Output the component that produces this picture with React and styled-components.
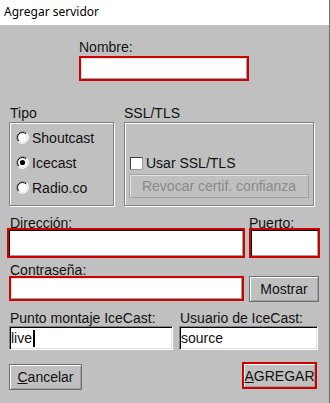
import React from 'react'
import styled, { createGlobalStyle } from 'styled-components'

const GlobalStyle = createGlobalStyle`
  body {
    margin: 0;
    font-family: "Liberation Sans", Arial, sans-serif;
  }
`

const Window = styled.div`
  width: 330px;
  height: 403px;
  box-sizing: border-box;
  border-right: 1px solid #6b6b6b;
  background: #c0c0c0;
  display: flex;
  flex-direction: column;
  overflow: hidden;
  color: #111;
  font-size: 14px;
`

const TitleBar = styled.div`
  height: 25px;
  line-height: 23px;
  flex-shrink: 0;
  background: #fff;
  padding-left: 4px;
  font-family: "Noto Sans", "Liberation Sans", sans-serif;
  font-size: 12px;
  color: #000;
`

const Content = styled.div`
  display: flex;
  flex-direction: column;
  padding-left: 9px;
`

const Section = styled.div`
  display: flex;
  align-items: flex-start;
  gap: ${p => p.$gap || 0}px;
  margin-top: ${p => p.$top || 0}px;
  margin-left: ${p => p.$left || 0}px;
`

const Column = styled.div`
  display: flex;
  flex-direction: column;
  margin-top: ${p => p.$top || 0}px;
`

const Label = styled.div`
  height: ${p => p.$h}px;
  line-height: 16px;
  padding-left: ${p => p.$indent || 0}px;
  white-space: nowrap;
`

const Field = styled.div`
  box-sizing: border-box;
  width: ${p => p.$w}px;
  height: ${p => p.$h}px;
  background: #fff;
  display: flex;
  align-items: center;
  padding-left: 1px;
  white-space: nowrap;
  border: 1px solid;
  border-color: #808080 #fff #fff #808080;
  box-shadow: inset 1px 1px 0 #000, inset -1px -1px 0 #dfdfdf;
`

const RedField = styled.div`
  box-sizing: border-box;
  width: ${p => p.$w}px;
  height: ${p => p.$h}px;
  background: #fff;
  border: 2px solid #cf0000;
  box-shadow: ${p =>
    p.$sunken
      ? 'inset 1px 1px 0 #000, inset -1px -1px 0 #a0a0a0'
      : 'inset 1px 1px 0 #e6e6e6, inset -1px -1px 0 #a0a0a0'};
`

const Caret = styled.span`
  display: inline-block;
  width: 2px;
  height: 17px;
  background: #000;
  margin-left: 1px;
`

const Button = styled.div`
  box-sizing: border-box;
  width: ${p => p.$w}px;
  height: ${p => p.$h}px;
  margin-top: ${p => p.$top || 0}px;
  display: flex;
  align-items: center;
  justify-content: center;
  white-space: nowrap;
  background: #c0c0c0;
  color: ${p => (p.$disabled ? '#8a8a8a' : '#111')};
  border: ${p => (p.$red ? '2px solid #cf0000' : p.$disabled ? '1px solid #a2a2a2' : '1px solid #6e6e6e')};
  box-shadow: ${p =>
    p.$disabled
      ? 'inset 1px 1px 0 #e4e4e4'
      : 'inset 1px 1px 0 #fff, inset -1px -1px 0 #a0a0a0'};
`

const GroupBox = styled.div`
  box-sizing: border-box;
  width: ${p => p.$w}px;
  height: 84px;
  border: 1px solid #808080;
  box-shadow: inset 1px 1px 0 #fff, 1px 1px 0 #fff;
  display: flex;
  flex-direction: column;
`

const RadioList = styled.div`
  display: flex;
  flex-direction: column;
  padding: 2px 0 0 6px;
`

const RadioRow = styled.div`
  height: 25px;
  display: flex;
  align-items: center;
  gap: 3px;
  line-height: 16px;
`

const SslBody = styled.div`
  flex: 1;
  display: flex;
  flex-direction: column;
  justify-content: flex-end;
  padding: 0 3px 7px 4px;
  gap: 3px;
`

const CheckRow = styled.div`
  height: 16px;
  display: flex;
  align-items: center;
  gap: 3px;
  margin-left: 1px;
  line-height: 16px;
`

const CheckBox = styled.span`
  box-sizing: border-box;
  width: 13px;
  height: 13px;
  background: #fff;
  border: 1px solid;
  border-color: #404040 #9a9a9a #9a9a9a #404040;
`

const ButtonRow = styled.div`
  display: flex;
  justify-content: space-between;
  align-items: flex-start;
  margin-top: 12px;
  padding-right: 12px;
`

const Radio = ({ checked }) => (
  <svg width="13" height="13" viewBox="0 0 13 13">
    <circle cx="6.5" cy="6.5" r="6" fill="#fff" />
    <path d="M2.26 10.74 A6 6 0 0 1 10.74 2.26" fill="none" stroke="#808080" />
    <path d="M10.74 2.26 A6 6 0 0 1 2.26 10.74" fill="none" stroke="#fff" />
    <path d="M2.96 10.04 A5 5 0 0 1 10.04 2.96" fill="none" stroke="#000" />
    <path d="M10.04 2.96 A5 5 0 0 1 2.96 10.04" fill="none" stroke="#dfdfdf" />
    {checked && <circle cx="6.5" cy="6.5" r="2.6" fill="#000" />}
  </svg>
)

export default function App() {
  return (
    <>
      <GlobalStyle />
      <Window>
        <TitleBar>Agregar servidor</TitleBar>
        <Content>
          <Section $top={14} $left={70}>
            <Column>
              <Label $h={17}>Nombre:</Label>
              <RedField $w={170} $h={25} />
            </Column>
          </Section>

          <Section $top={24} $gap={10}>
            <Column>
              <Label $h={17} $indent={1}>Tipo</Label>
              <GroupBox $w={105}>
                <RadioList>
                  <RadioRow><Radio />Shoutcast</RadioRow>
                  <RadioRow><Radio checked />Icecast</RadioRow>
                  <RadioRow><Radio />Radio.co</RadioRow>
                </RadioList>
              </GroupBox>
            </Column>
            <Column>
              <Label $h={17}>SSL/TLS</Label>
              <GroupBox $w={190}>
                <SslBody>
                  <CheckRow><CheckBox />Usar SSL/TLS</CheckRow>
                  <Button $w={180} $h={24} $disabled>Revocar certif. confianza</Button>
                </SslBody>
              </GroupBox>
            </Column>
          </Section>

          <Section $top={9} $gap={4} $left={-2}>
            <Column>
              <Label $h={13} $indent={3}>Dirección:</Label>
              <RedField $w={238} $h={30} $sunken />
            </Column>
            <Column>
              <Label $h={13}>Puerto:</Label>
              <RedField $w={71} $h={30} $sunken />
            </Column>
          </Section>

          <Section $top={4} $gap={5}>
            <Column>
              <Label $h={14} $indent={1}>Contraseña:</Label>
              <RedField $w={235} $h={25} />
            </Column>
            <Column $top={14}>
              <Button $w={70} $h={26}>Mostrar</Button>
            </Column>
          </Section>

          <Section $top={8} $gap={6}>
            <Column>
              <Label $h={16} $indent={1}>Punto montaje IceCast:</Label>
              <Field $w={164} $h={24}>live<Caret /></Field>
            </Column>
            <Column>
              <Label $h={16} $indent={1}>Usuario de IceCast:</Label>
              <Field $w={139} $h={24}>source</Field>
            </Column>
          </Section>

          <ButtonRow>
            <Button $w={73} $h={26} $top={2}><u>C</u>ancelar</Button>
            <Button $w={75} $h={27} $red><u>A</u>GREGAR</Button>
          </ButtonRow>
        </Content>
      </Window>
    </>
  )
}
